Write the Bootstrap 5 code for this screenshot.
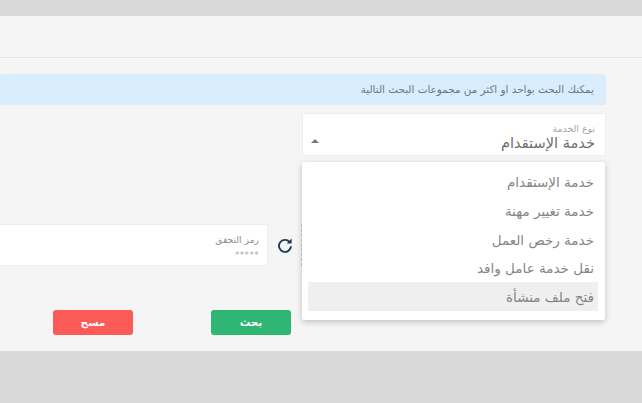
<!DOCTYPE html>
<html lang="ar" dir="rtl">

<head>
    <meta charset="UTF-8">
    <meta name="viewport" content="width=device-width, initial-scale=1.0">
    <title>البحث</title>
    <link rel="stylesheet" href="https://cdn.jsdelivr.net/npm/bootstrap@5.3.2/dist/css/bootstrap.min.css">
    <style>
        body {
            height: 403px;
            overflow: hidden;
            padding-top: 16px;
            background-color: #d9d9d9;
            font-family: "DejaVu Sans", "Noto Sans", sans-serif;
        }

        .search-panel {
            height: 335px;
            background-color: #f5f5f5;
            overflow: hidden;
        }

        .panel-head {
            height: 42px;
            border-bottom: 1px solid #e4e4e4;
        }

        .panel-inner {
            padding: 16px 36px 0 0;
        }

        .info-bar {
            height: 31px;
            margin: 0;
            padding: 0 12px;
            border: 0;
            border-radius: 3px;
            background-color: #d9edfc;
            color: #667889;
            font-size: 10.4px;
        }

        .service-select {
            width: 304px;
            height: 43px;
            margin-top: 8px;
            padding: 9px 10px 0 7px;
            background-color: #fff;
            border: 1px solid #eee;
            border-radius: 2px;
        }

        .select-label {
            font-size: 9.4px;
            line-height: 11px;
            color: #a5a5a5;
        }

        .select-value {
            font-size: 14.6px;
            line-height: 17px;
            color: #6e6e6e;
        }

        .select-caret {
            width: 0;
            height: 0;
            margin-top: 16px;
            margin-left: 1px;
            border-left: 4px solid transparent;
            border-right: 4px solid transparent;
            border-bottom: 4px solid #777;
        }

        .service-menu.dropdown-menu {
            top: 48px;
            right: 0;
            left: auto;
            width: 303px;
            height: 158px;
            padding: 5px 7px 0 6px;
            border: 0;
            border-radius: 2px;
            box-shadow: 0 2px 6px rgba(0, 0, 0, 0.22);
            text-align: right;
        }

        .service-menu .dropdown-item {
            height: 28.8px;
            padding: 1px 4px 0;
            font-size: 13.5px;
            line-height: 28.8px;
            color: #858585;
            text-align: right;
        }

        .service-menu .dropdown-item.current {
            background-color: #efefef;
        }

        .captcha-row {
            margin-top: 68px;
            height: 42px;
        }

        .captcha-image {
            width: 305px;
            flex-shrink: 0;
            border-left: 1px dashed #ccc;
        }

        .captcha-refresh {
            width: 33px;
            flex-shrink: 0;
        }

        .captcha-field {
            flex: 1;
            padding: 8px 8px 0 0;
            background-color: #fff;
            border: 1px solid #eee;
            border-left: 0;
            border-radius: 2px;
        }

        .captcha-label {
            font-size: 9.2px;
            line-height: 13px;
            color: #8e8e8e;
        }

        .captcha-hint {
            font-size: 9px;
            line-height: 14px;
            margin-top: 2px;
            color: #aaa;
            letter-spacing: 0.3px;
        }

        .action-row {
            margin-top: 44px;
            margin-right: 315px;
            gap: 78px;
        }

        .action-btn {
            width: 80px;
            height: 25px;
            padding: 0;
            border: 0;
            border-radius: 3px;
            color: #fff;
            font-size: 10.5px;
            font-weight: 700;
            line-height: 25px;
        }

        .action-search,
        .action-search:hover {
            background-color: #2fb574;
            color: #fff;
        }

        .action-clear,
        .action-clear:hover {
            background-color: #fb5a57;
            color: #fff;
        }
    </style>
</head>

<body>
    <div class="search-panel">
        <div class="panel-head"></div>
        <div class="panel-inner">
            <div class="alert info-bar d-flex align-items-center">يمكنك البحث بواحد او اكثر من مجموعات البحث التالية</div>

            <div class="position-relative service-select d-flex justify-content-between align-items-start">
                <div>
                    <div class="select-label">نوع الخدمة</div>
                    <div class="select-value">خدمة الإستقدام</div>
                </div>
                <span class="select-caret"></span>
                <div class="dropdown-menu show service-menu">
                    <a class="dropdown-item" href="#">خدمة الإستقدام</a>
                    <a class="dropdown-item" href="#">خدمة تغيير مهنة</a>
                    <a class="dropdown-item" href="#">خدمة رخص العمل</a>
                    <a class="dropdown-item" href="#">نقل خدمة عامل وافد</a>
                    <a class="dropdown-item current" href="#">فتح ملف منشأة</a>
                </div>
            </div>

            <div class="captcha-row d-flex">
                <div class="captcha-image"></div>
                <div class="captcha-refresh d-flex align-items-center justify-content-center">
                    <svg width="16" height="16" viewBox="0 0 16 16" fill="none">
                        <path d="M12.6 5A6 6 0 1 0 14 9.2" stroke="#1f3a52" stroke-width="1.9" />
                        <path d="M14.6 1.4V6.4H9.6Z" fill="#1f3a52" />
                    </svg>
                </div>
                <div class="captcha-field">
                    <div class="captcha-label">رمز التحقق</div>
                    <div class="captcha-hint">*****</div>
                </div>
            </div>

            <div class="action-row d-flex">
                <button class="btn action-btn action-search" type="button">بحث</button>
                <button class="btn action-btn action-clear" type="button">مسح</button>
            </div>
        </div>
    </div>

    <script src="https://cdn.jsdelivr.net/npm/bootstrap@5.3.2/dist/js/bootstrap.bundle.min.js"></script>
</body>

</html>
